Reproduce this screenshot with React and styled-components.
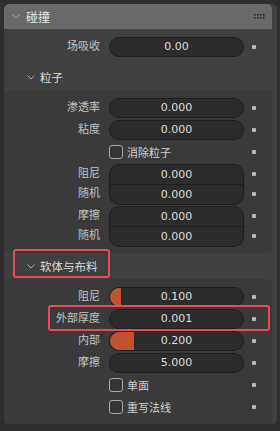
import React from 'react'
import styled, { createGlobalStyle } from 'styled-components'

const GlobalStyle = createGlobalStyle`
  html, body {
    margin: 0;
    padding: 0;
    background: #2e2e2e;
  }
  body {
    font-family: 'DejaVu Sans', 'Noto Sans CJK SC', sans-serif;
    font-size: 11px;
    color: #d4d4d4;
  }
`

const Page = styled.div`
  width: 280px;
  height: 431px;
  padding: 4px 3px 7px 4px;
  box-sizing: border-box;
`

const Panel = styled.div`
  position: relative;
  height: 420px;
  background: #404040;
  border-radius: 5px 5px 5px 5px;
  overflow: hidden;
`

const PanelHeader = styled.div`
  display: flex;
  align-items: center;
  height: 25px;
  margin-right: 5px;
  padding-left: 8px;
  background: #696969;
  border-radius: 5px 5px 0 0;
  color: #e6e6e6;
  font-size: 12px;
`

const Title = styled.span`
  margin-left: 6px;
  flex: 1;
`

const PanelBody = styled.div`
  padding-top: 8px;
`

const SubHeader = styled.div`
  display: flex;
  align-items: center;
  height: 26px;
  margin-top: ${p => p.$gap || 0}px;
  padding-left: 23px;
  color: #dcdcdc;
  font-size: 11.5px;
`

const SubTitle = styled.span`
  margin-left: 5px;
`

const SubPanel = styled.div`
  display: flex;
  flex-direction: column;
  gap: 2px;
  margin-right: 5px;
  padding: 8px 0 7px;
  background: #3a3a3a;
  border-radius: 5px;
`

const Row = styled.div`
  display: grid;
  grid-template-columns: 105px 135px auto;
  align-items: center;
  height: ${p => p.$h || 20}px;
`

const Labels = styled.div`
  display: flex;
  flex-direction: column;
  align-self: stretch;
`

const Label = styled.div`
  height: 20px;
  line-height: 20px;
  padding-right: 9px;
  text-align: right;
  color: #c2c2c2;
  white-space: nowrap;
`

const Dots = styled.div`
  display: flex;
  flex-direction: column;
  align-self: stretch;
`

const DotCell = styled.div`
  display: flex;
  align-items: center;
  height: 20px;
  padding-left: 8px;
`

const Dot = styled.span`
  width: 4px;
  height: 4px;
  border-radius: 1px;
  background: #b8b8b8;
`

const FieldGroup = styled.div`
  display: flex;
  flex-direction: column;
  border: 1px solid #1e1e1e;
  border-radius: 10px;
  overflow: hidden;
  background: #2c2c2c;
`

const Field = styled.div`
  position: relative;
  height: ${p => (p.$inGroup ? 19 : 18)}px;
  line-height: ${p => (p.$inGroup ? 19 : 18)}px;
  text-align: center;
  color: #dedede;
  background: #2c2c2c;
  border-top: ${p => (p.$divider ? '1px solid #1e1e1e' : 'none')};
`

const Fill = styled.div`
  position: absolute;
  left: 0;
  top: 0;
  bottom: 0;
  background: #c0532f;
`

const Value = styled.span`
  position: relative;
`

const CheckWrap = styled.label`
  display: flex;
  align-items: center;
  gap: 4px;
  grid-column: 2;
  color: #d0d0d0;
`

const Box = styled.span`
  width: 12px;
  height: 12px;
  border: 1px solid #a8a8a8;
  border-radius: 3px;
  background: #353535;
`

const Highlight = styled.div`
  position: absolute;
  border: 2px solid #ea4a5c;
  border-radius: 3px;
  pointer-events: none;
`

const Chevron = () => (
  <svg width="8" height="5" viewBox="0 0 8 5">
    <path d="M0.5 0.5 L4 4 L7.5 0.5" fill="none" stroke="#a8a8a8" strokeWidth="1" />
  </svg>
)

const Grip = () => (
  <svg width="11" height="5" viewBox="0 0 11 5" style={{ marginRight: 7 }}>
    {[0, 3, 6, 9].map(x =>
      [0, 3].map(y => <rect key={x + '-' + y} x={x} y={y} width="1.5" height="1.5" fill="#1e1e1e" />)
    )}
  </svg>
)

const NumberRow = ({ items }) => (
  <Row $h={items.length * 20}>
    <Labels>
      {items.map(it => <Label key={it.label}>{it.label}</Label>)}
    </Labels>
    <FieldGroup>
      {items.map((it, i) => (
        <Field key={it.label} $inGroup={items.length > 1} $divider={i > 0}>
          {it.fill ? <Fill style={{ width: it.fill * 100 + '%' }} /> : null}
          <Value>{it.value}</Value>
        </Field>
      ))}
    </FieldGroup>
    <Dots>
      {items.map(it => (
        <DotCell key={it.label}><Dot /></DotCell>
      ))}
    </Dots>
  </Row>
)

const CheckRow = ({ label }) => (
  <Row>
    <CheckWrap>
      <Box />
      {label}
    </CheckWrap>
    <DotCell><Dot /></DotCell>
  </Row>
)

const App = () => {
  return (
    <Page>
      <GlobalStyle />
      <Panel>
        <PanelHeader>
          <Chevron />
          <Title>碰撞</Title>
          <Grip />
        </PanelHeader>
        <PanelBody>
          <NumberRow items={[{ label: '场吸收', value: '0.00' }]} />
          <SubHeader $gap={7}>
            <Chevron />
            <SubTitle>粒子</SubTitle>
          </SubHeader>
          <SubPanel>
            <NumberRow items={[{ label: '渗透率', value: '0.000' }]} />
            <NumberRow items={[{ label: '粘度', value: '0.000' }]} />
            <CheckRow label="消除粒子" />
            <NumberRow items={[{ label: '阻尼', value: '0.000' }, { label: '随机', value: '0.000' }]} />
            <NumberRow items={[{ label: '摩擦', value: '0.000' }, { label: '随机 ', value: '0.000' }]} />
          </SubPanel>
          <SubHeader>
            <Chevron />
            <SubTitle>软体与布料</SubTitle>
          </SubHeader>
          <SubPanel>
            <NumberRow items={[{ label: '阻尼', value: '0.100', fill: 0.085 }]} />
            <NumberRow items={[{ label: '外部厚度', value: '0.001' }]} />
            <NumberRow items={[{ label: '内部', value: '0.200', fill: 0.18 }]} />
            <NumberRow items={[{ label: '摩擦', value: '5.000' }]} />
            <CheckRow label="单面" />
            <CheckRow label="重写法线" />
          </SubPanel>
        </PanelBody>
        <Highlight style={{ left: 9, top: 245, width: 93, height: 25 }} />
        <Highlight style={{ left: 44, top: 301, width: 218, height: 22 }} />
      </Panel>
    </Page>
  )
}

export default App
